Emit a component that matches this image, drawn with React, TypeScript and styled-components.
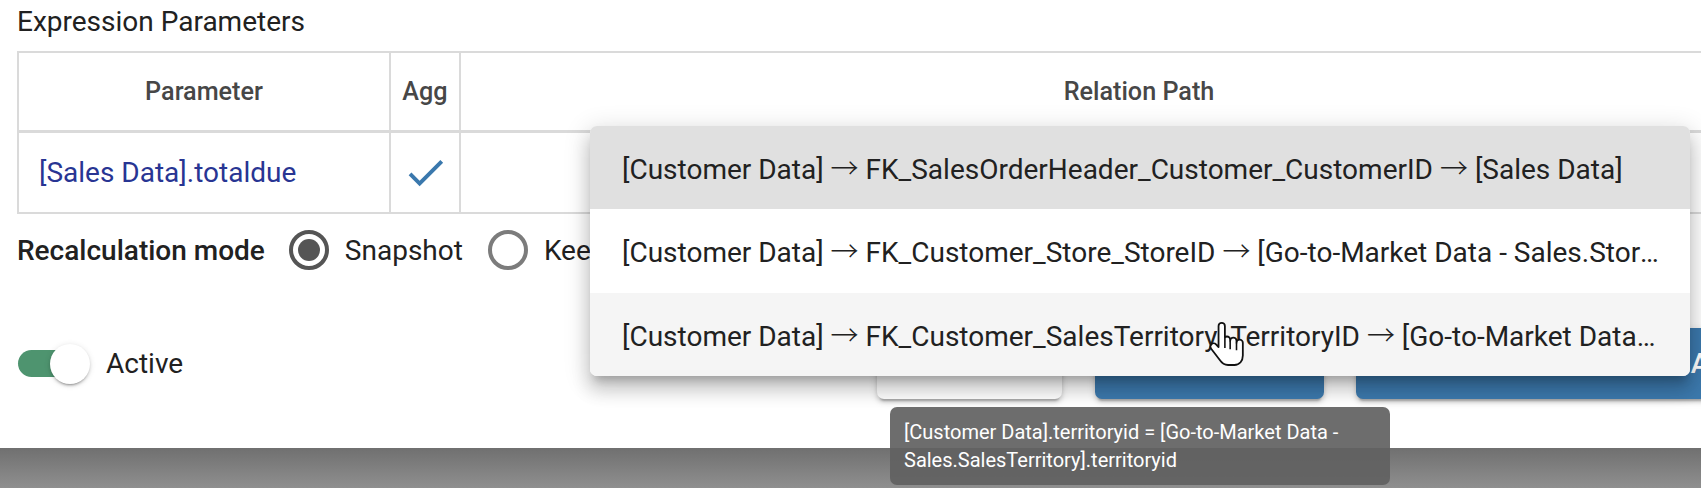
import React from "react";
import styled, { createGlobalStyle } from "styled-components";

const GlobalStyle = createGlobalStyle`
  html, body { margin: 0; padding: 0; overflow: hidden; }
  body { font-family: Roboto, "Noto Sans", "Liberation Sans", sans-serif; color: #212121; }
  *, *::before, *::after { box-sizing: border-box; }
`;

const Page = styled.div`
  position: relative;
  width: 1701px;
  height: 488px;
  overflow: hidden;
  background: linear-gradient(180deg, #707070 448px, #8f8f8f 488px);
`;

const Dialog = styled.section`
  width: 2113px;
  height: 448px;
  background: #fff;
  padding: 0 17px;
  display: flex;
  flex-direction: column;
`;

const Title = styled.h2`
  margin: 0 0 7px;
  font-size: 28px;
  font-weight: 400;
  line-height: 44px;
  color: #212121;
`;

const Table = styled.div`
  display: grid;
  grid-template-columns: 370px 68px 1356px;
  grid-template-rows: 77px 79px;
  gap: 3px 2px;
  padding: 2px;
  width: max-content;
  background: #dadada;
`;

const HeadCell = styled.div`
  background: #fff;
  display: flex;
  align-items: center;
  justify-content: center;
  font-size: 25.2px;
  font-weight: 500;
  color: #474747;
`;

const Cell = styled.div<{ $center?: boolean }>`
  background: #fff;
  display: flex;
  align-items: center;
  justify-content: ${(p) => (p.$center ? "center" : "flex-start")};
  padding: 0 ${(p) => (p.$center ? "0" : "20px")};
  font-size: 28px;
`;

const ParamLink = styled.span`
  color: #283593;
`;

const RadioRow = styled.div`
  margin-top: 16px;
  height: 40px;
  display: flex;
  align-items: center;
`;

const FieldLabel = styled.span`
  font-size: 28px;
  font-weight: 500;
  color: #212121;
  margin-right: 24px;
`;

const RadioOption = styled.label`
  display: flex;
  align-items: center;
  gap: 16px;
  margin-right: 25px;
  font-size: 28px;
  color: #212121;
  white-space: nowrap;
`;

const RadioCircle = styled.span<{ $checked?: boolean }>`
  width: 40px;
  height: 40px;
  border-radius: 50%;
  border: 4.5px solid ${(p) => (p.$checked ? "#555" : "#7c7c7c")};
  display: flex;
  align-items: center;
  justify-content: center;
  &::after {
    content: "";
    width: 22px;
    height: 22px;
    border-radius: 50%;
    background: ${(p) => (p.$checked ? "#555" : "transparent")};
  }
`;

const Footer = styled.div`
  margin-top: 58px;
  height: 71px;
  display: flex;
  align-items: center;
  justify-content: space-between;
`;

const SwitchLabel = styled.label`
  display: flex;
  align-items: center;
  gap: 17px;
  font-size: 28px;
  color: #212121;
`;

const Switch = styled.span`
  position: relative;
  width: 72px;
  height: 40px;
  display: inline-block;
`;

const Track = styled.span`
  position: absolute;
  left: 1px;
  top: 6.5px;
  width: 60px;
  height: 27px;
  border-radius: 13.5px;
  background: #4e946f;
`;

const Thumb = styled.span`
  position: absolute;
  left: 33px;
  top: 0;
  width: 40px;
  height: 40px;
  border-radius: 50%;
  background: #fff;
  box-shadow: 0 3px 2px -2px rgba(0, 0, 0, 0.25), 0 2px 3px 0 rgba(0, 0, 0, 0.14),
    0 1px 6px 0 rgba(0, 0, 0, 0.12);
`;

const ButtonGroup = styled.div`
  display: flex;
  align-items: center;
  gap: 32px;
`;

const Button = styled.button<{ $variant: "plain" | "primary"; $width: number }>`
  width: ${(p) => p.$width}px;
  height: 71px;
  border: none;
  border-radius: 7px;
  font-family: inherit;
  font-size: 28px;
  font-weight: 500;
  background: ${(p) => (p.$variant === "primary" ? "#3c79ad" : "#fff")};
  color: ${(p) => (p.$variant === "primary" ? "#fff" : "#3c79ad")};
  box-shadow: 0 5px 2px -3px rgba(0, 0, 0, 0.2), 0 3px 4px 0 rgba(0, 0, 0, 0.14),
    0 2px 9px 0 rgba(0, 0, 0, 0.12);
  &:first-child {
    margin-right: 1px;
  }
`;

const Menu = styled.ul`
  position: absolute;
  left: 590px;
  top: 126px;
  width: 1100px;
  margin: 0;
  padding: 0;
  list-style: none;
  background: #fff;
  border-radius: 7px;
  overflow: hidden;
  box-shadow: 0 9px 9px -5px rgba(0, 0, 0, 0.2), 0 14px 17px 2px rgba(0, 0, 0, 0.14),
    0 5px 24px 4px rgba(0, 0, 0, 0.12);
`;

const MenuItem = styled.li<{ $state?: "selected" | "hover" }>`
  height: 83.33px;
  line-height: 83.33px;
  padding: 0 31px 0 32px;
  font-size: 28px;
  color: #212121;
  white-space: nowrap;
  overflow: hidden;
  text-overflow: ellipsis;
  background: ${(p) =>
    p.$state === "selected" ? "#e0e0e0" : p.$state === "hover" ? "#f5f5f5" : "#fff"};
`;

const Arrow = styled.span`
  font-family: "Noto Sans CJK JP", "DejaVu Sans", sans-serif;
  font-weight: 300;
`;

const Tooltip = styled.div`
  position: absolute;
  left: 890px;
  top: 407px;
  width: 500px;
  padding: 11px 14px;
  border-radius: 7px;
  background: rgba(97, 97, 97, 0.92);
  color: #fff;
  font-size: 20px;
  font-weight: 400;
  line-height: 28px;
`;

const Cursor = styled.svg`
  position: absolute;
  left: 1208px;
  top: 320px;
`;

const CheckIcon = () => (
  <svg width="47" height="47" viewBox="0 0 24 24" aria-hidden="true">
    <path fill="#3a78ad" d="M9 16.17 4.83 12l-1.42 1.41L9 19 21 7l-1.41-1.41z" />
  </svg>
);

const HandCursor = () => (
  <Cursor width="38" height="52" viewBox="0 0 18 24" aria-hidden="true">
    <path
      d="M6.5 1 C5.7 1 5 1.7 5 2.5 V12.5 L3.8 11.2 C3.2 10.6 2.2 10.6 1.6 11.2 C1 11.8 1 12.7 1.5 13.3 L5.5 18.5 C6.5 20 7.8 21 9.5 21 H12.5 C15 21 16.5 19 16.5 16.5 V10.5 C16.5 9.7 15.8 9 15 9 C14.2 9 13.5 9.7 13.5 10.5 V9.5 C13.5 8.7 12.8 8 12 8 C11.2 8 10.5 8.7 10.5 9.5 V9 C10.5 8.2 9.8 7.5 9 7.5 C8.5 7.5 8.2 7.7 8 7.9 V2.5 C8 1.7 7.3 1 6.5 1 Z"
      fill="#fff"
      stroke="#111"
      strokeWidth="0.85"
      strokeLinejoin="round"
    />
    <path d="M8 8 V13 M10.5 9.5 V13.5 M13.5 10.5 V14" stroke="#111" strokeWidth="0.75" fill="none" />
  </Cursor>
);

const paths = [
  "[Customer Data] → FK_SalesOrderHeader_Customer_CustomerID → [Sales Data]",
  "[Customer Data] → FK_Customer_Store_StoreID → [Go-to-Market Data - Sales.Store]",
  "[Customer Data] → FK_Customer_SalesTerritory_TerritoryID → [Go-to-Market Data - Sales.SalesTerritory]",
];

const renderPath = (p: string) =>
  p.split("→").map((part, i) => (
    <React.Fragment key={i}>
      {i > 0 && <Arrow>→</Arrow>}
      {part}
    </React.Fragment>
  ));

export default function App() {
  return (
    <>
      <GlobalStyle />
      <Page>
        <Dialog>
          <Title>Expression Parameters</Title>
          <Table>
            <HeadCell>Parameter</HeadCell>
            <HeadCell>Agg</HeadCell>
            <HeadCell>Relation Path</HeadCell>
            <Cell>
              <ParamLink>[Sales Data].totaldue</ParamLink>
            </Cell>
            <Cell $center>
              <CheckIcon />
            </Cell>
            <Cell />
          </Table>
          <RadioRow>
            <FieldLabel>Recalculation mode</FieldLabel>
            <RadioOption>
              <RadioCircle $checked />
              Snapshot
            </RadioOption>
            <RadioOption>
              <RadioCircle />
              Keep updated
            </RadioOption>
          </RadioRow>
          <Footer>
            <SwitchLabel>
              <Switch>
                <Track />
                <Thumb />
              </Switch>
              Active
            </SwitchLabel>
            <ButtonGroup>
              <Button $variant="plain" $width={185}>
                Cancel
              </Button>
              <Button $variant="primary" $width={229}>
                Save
              </Button>
              <Button $variant="primary" $width={740}>
                Apply
              </Button>
            </ButtonGroup>
          </Footer>
        </Dialog>
        <Menu>
          {paths.map((p, i) => (
            <MenuItem key={p} $state={i === 0 ? "selected" : i === 2 ? "hover" : undefined}>
              {renderPath(p)}
            </MenuItem>
          ))}
        </Menu>
        <HandCursor />
        <Tooltip>[Customer Data].territoryid = [Go-to-Market Data - Sales.SalesTerritory].territoryid</Tooltip>
      </Page>
    </>
  );
}
